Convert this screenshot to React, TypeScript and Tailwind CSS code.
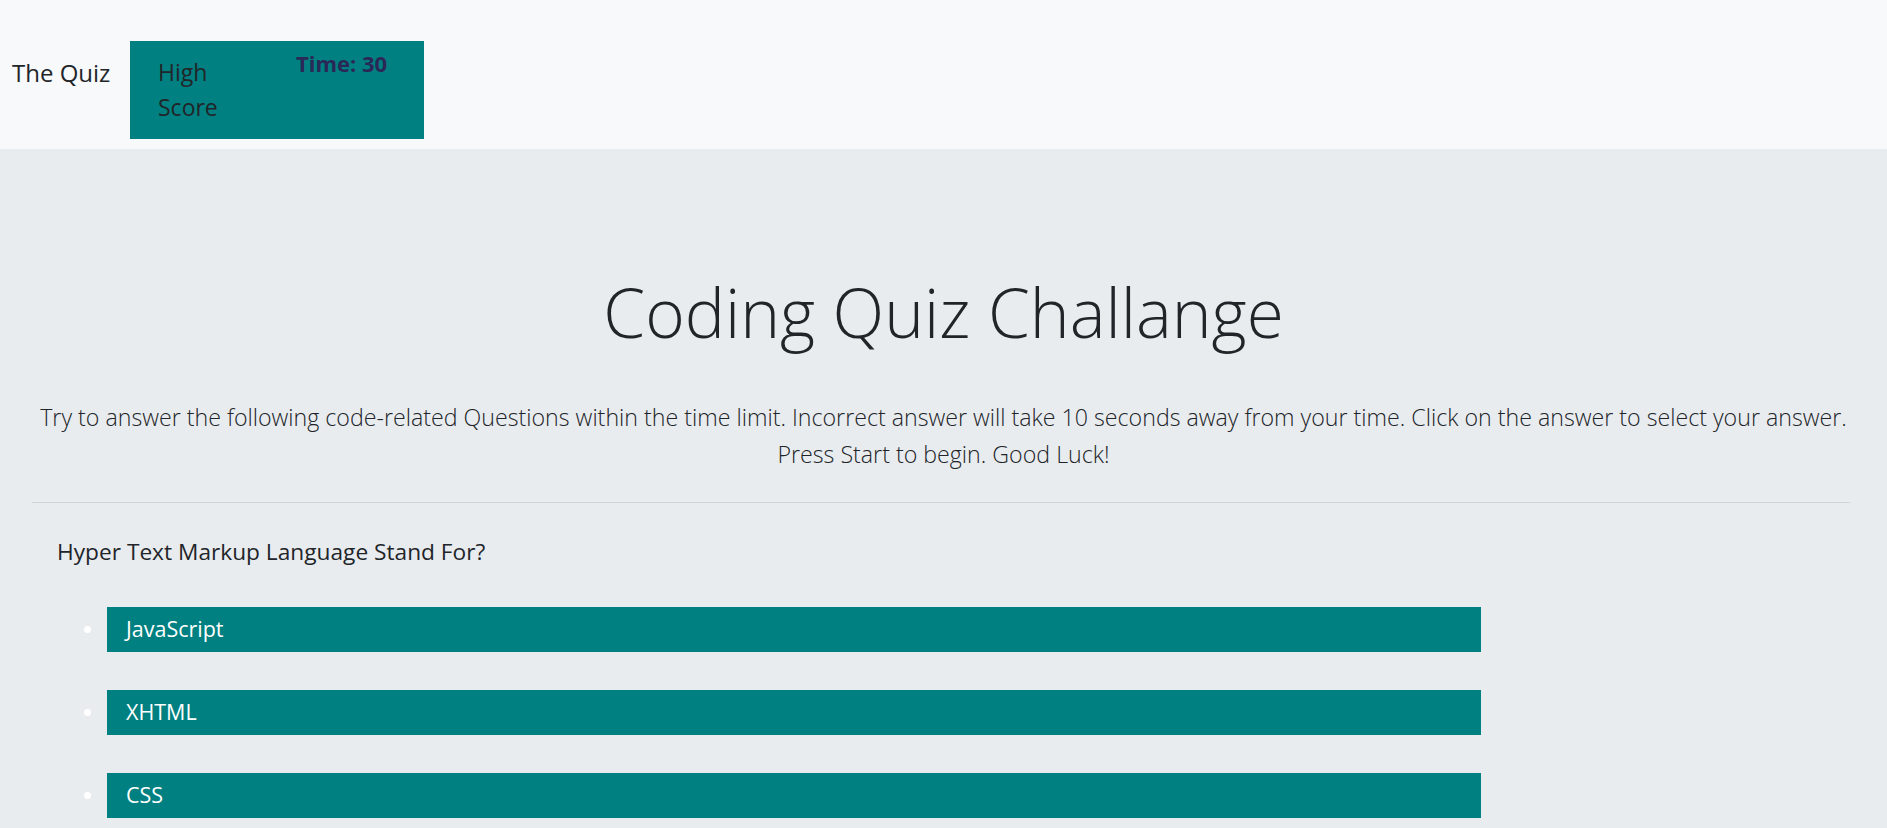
import React from 'react';

const answers = ['JavaScript', 'XHTML', 'CSS'];

export default function App() {
  return (
    <div className="min-h-screen bg-[#e9ecef] text-[#212529] font-['Open_Sans','Liberation_Sans',sans-serif]">
      {/* navbar */}
      <header className="h-[149px] bg-[#f8f9fa] flex items-start pt-[41px]">
        <div className="ml-[12px] mt-[14px] text-[24px] leading-[36px] w-[118px]">The Quiz</div>
        <div className="w-[294px] h-[98px] bg-[#008080] flex items-start">
          <div className="ml-[28px] mt-[14px] w-[80px] text-[23px] leading-[35px]">High Score</div>
          <div className="ml-[58px] mt-[7px] text-[22px] leading-[30px] font-bold text-[#2a2857]">Time: 30</div>
        </div>
      </header>

      {/* jumbotron */}
      <main className="px-[32px] pt-[123px] pb-[10px]">
        <h1 className="text-center text-[67.5px] leading-[80px] font-light">Coding Quiz Challange</h1>
        <p className="mt-[47px] text-center text-[23.2px] leading-[37px] font-light">
          Try to answer the following code-related Questions within the time limit. Incorrect answer will take 10 seconds away from your time. Click on the answer to select your answer.
          <br />
          Press Start to begin. Good Luck!
        </p>
        <hr className="mt-[29px] mr-[5px] border-t border-[#d2d5d8]" />

        <div className="pl-[25px] mt-[31px]">
          <div className="text-[22.7px] leading-[36px]">Hyper Text Markup Language Stand For?</div>
          <ul className="mt-[37px] flex flex-col gap-[38px]">
            {answers.map((a) => (
              <li key={a} className="flex items-center">
                <span className="ml-[27px] w-[7px] h-[7px] rounded-full bg-white" />
                <button className="ml-[16px] w-[1374px] h-[45px] bg-[#008080] text-white text-left pl-[19px] text-[21.5px]">
                  {a}
                </button>
              </li>
            ))}
          </ul>
        </div>
      </main>
    </div>
  );
}
